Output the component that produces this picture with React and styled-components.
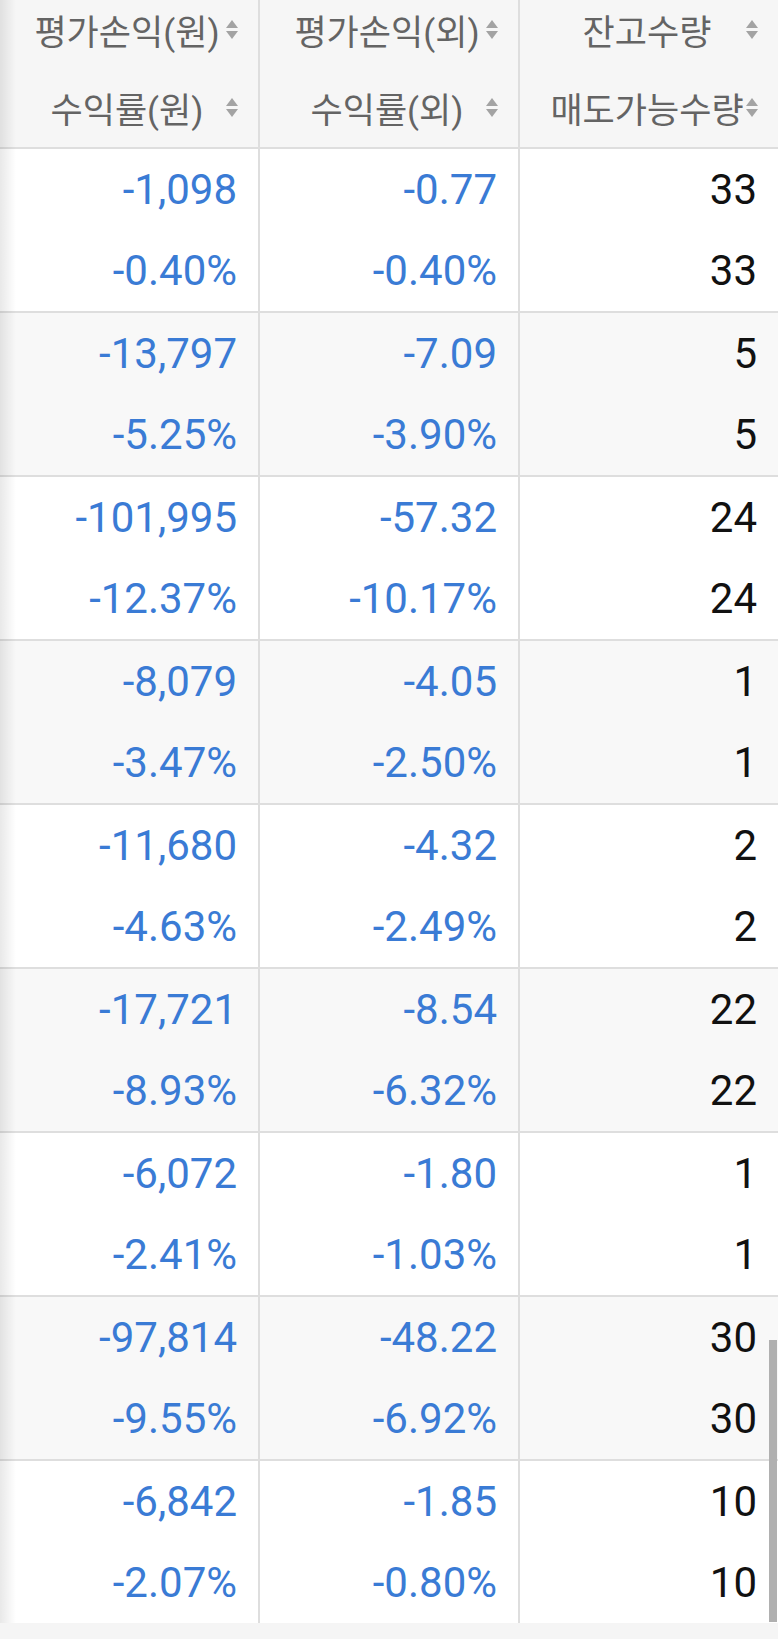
import React from 'react';
import styled, { createGlobalStyle } from 'styled-components';

const GlobalStyle = createGlobalStyle`
    body {
        margin: 0;
        background: #f5f5f5;
        font-family: Roboto, "Noto Sans CJK KR", sans-serif;
    }
`;

const headers = [
    ['평가손익(원)', '수익률(원)'],
    ['평가손익(외)', '수익률(외)'],
    ['잔고수량', '매도가능수량'],
];

const rows = [
    ['-1,098', '-0.40%', '-0.77', '-0.40%', '33', '33'],
    ['-13,797', '-5.25%', '-7.09', '-3.90%', '5', '5'],
    ['-101,995', '-12.37%', '-57.32', '-10.17%', '24', '24'],
    ['-8,079', '-3.47%', '-4.05', '-2.50%', '1', '1'],
    ['-11,680', '-4.63%', '-4.32', '-2.49%', '2', '2'],
    ['-17,721', '-8.93%', '-8.54', '-6.32%', '22', '22'],
    ['-6,072', '-2.41%', '-1.80', '-1.03%', '1', '1'],
    ['-97,814', '-9.55%', '-48.22', '-6.92%', '30', '30'],
    ['-6,842', '-2.07%', '-1.85', '-0.80%', '10', '10'],
];

const SortIcon = () => (
    <SortSvg width="12" height="19" viewBox="0 0 12 19">
        <polygon points="6,0 12,8 0,8" />
        <polygon points="0,11 12,11 6,19" />
    </SortSvg>
);

export default function App() {
    return (
        <>
            <GlobalStyle />
            <Table>
                <HeaderRow>
                    {headers.map((pair, i) => (
                        <HeaderCell key={i} last={i === headers.length - 1}>
                            {pair.map(label => (
                                <HeadLine key={label}>
                                    <Label>{label}</Label>
                                    <SortIcon />
                                </HeadLine>
                            ))}
                        </HeaderCell>
                    ))}
                </HeaderRow>
                {rows.map((r, i) => (
                    <Row key={i} striped={i % 2 === 1} last={i === rows.length - 1}>
                        {[0, 1, 2].map(c => (
                            <Cell key={c} last={c === 2}>
                                <Value plain={c === 2}>{r[c * 2]}</Value>
                                <Value plain={c === 2}>{r[c * 2 + 1]}</Value>
                            </Cell>
                        ))}
                    </Row>
                ))}
                <EdgeShadow />
                <ScrollThumb />
            </Table>
        </>
    );
}

const Table = styled.div`
    position: relative;
    background: #ffffff;
`;

const HeaderRow = styled.div`
    display: grid;
    grid-template-columns: 260px 260px 1fr;
    height: 149px;
    box-sizing: border-box;
    background: #f6f6f6;
    border-bottom: 2px solid #dedede;
`;

const HeaderCell = styled.div`
    display: flex;
    flex-direction: column;
    gap: 20px;
    padding: 0 20px 11px 30px;
    box-sizing: border-box;
    border-right: ${({ last }) => (last ? 'none' : '2px solid #dedede')};
`;

const HeadLine = styled.div`
    display: flex;
    align-items: center;
    height: 58px;
`;

const Label = styled.span`
    flex: 1;
    text-align: center;
    white-space: nowrap;
    font-size: 35px;
    color: #646464;
`;

const SortSvg = styled.svg`
    flex: none;
    margin-left: 2px;
    fill: #a3a3a3;
`;

const Row = styled.div`
    display: grid;
    grid-template-columns: 260px 260px 1fr;
    height: ${({ last }) => (last ? '162px' : '164px')};
    box-sizing: border-box;
    background: ${({ striped }) => (striped ? '#f8f8f8' : '#ffffff')};
    border-bottom: ${({ last }) => (last ? 'none' : '2px solid #dedede')};
`;

const Cell = styled.div`
    display: flex;
    flex-direction: column;
    padding-right: 21px;
    box-sizing: border-box;
    border-right: ${({ last }) => (last ? 'none' : '2px solid #dedede')};
`;

const Value = styled.div`
    height: 81px;
    line-height: 81px;
    text-align: right;
    font-size: 42px;
    color: ${({ plain }) => (plain ? '#111111' : '#3a7bd5')};
`;

const EdgeShadow = styled.div`
    position: absolute;
    top: 0;
    bottom: 0;
    left: 0;
    width: 16px;
    background: linear-gradient(to right, rgba(0, 0, 0, 0.09), rgba(0, 0, 0, 0));
    pointer-events: none;
`;

const ScrollThumb = styled.div`
    position: absolute;
    right: 1px;
    bottom: 1px;
    width: 8px;
    height: 282px;
    background: #b0b0b0;
`;
